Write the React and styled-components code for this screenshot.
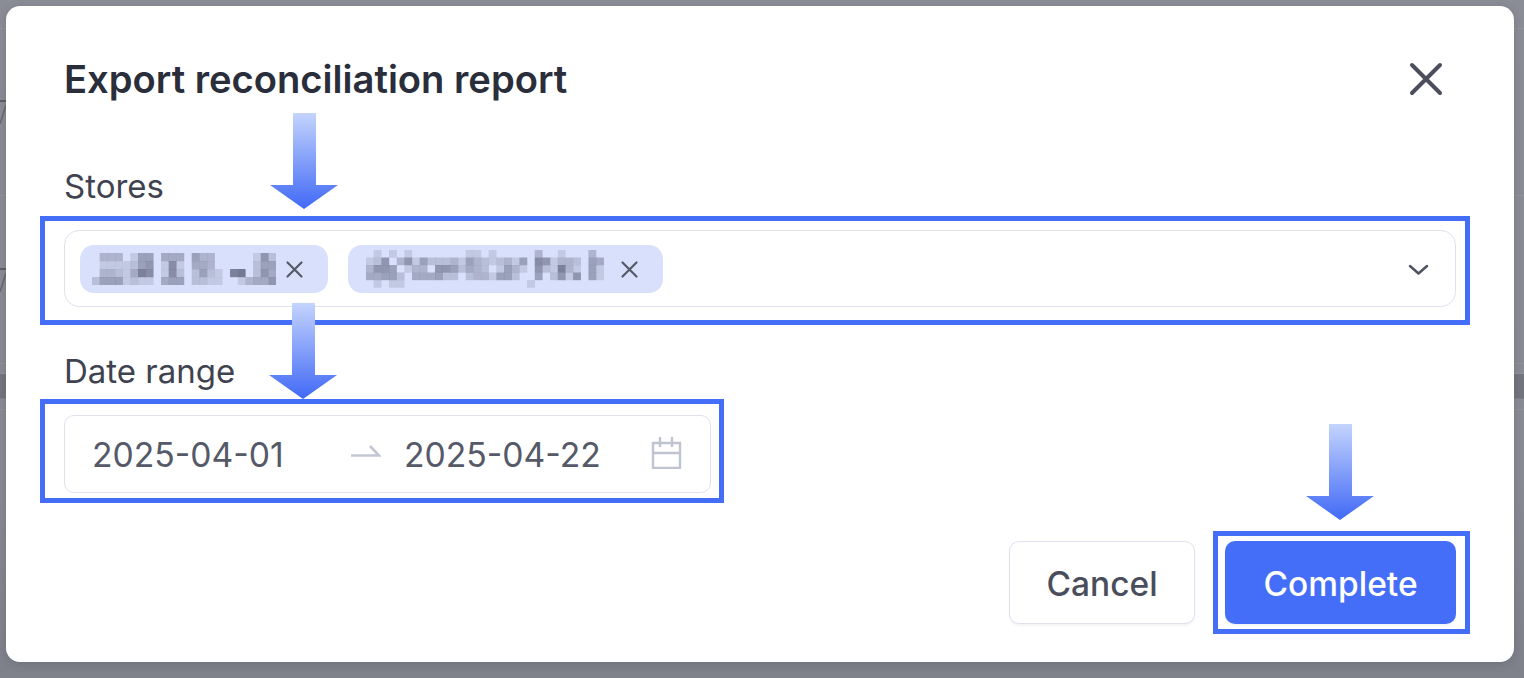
import React from 'react';
import styled, { createGlobalStyle } from 'styled-components';

const GlobalStyle = createGlobalStyle`
  html, body {
    margin: 0;
    padding: 0;
    background: #85878f;
  }
  body {
    font-family: Inter, "Noto Sans", "Liberation Sans", sans-serif;
    -webkit-font-smoothing: antialiased;
  }
`;

const Page = styled.div`
  position: relative;
  width: 100%;
  height: 678px;
  overflow: hidden;
  background: linear-gradient(180deg, #8a8c96 0%, #888a94 70%, #7e808a 100%);
`;

const BackdropRow = styled.div`
  box-sizing: border-box;
  height: ${(p) => p.$height}px;
  padding-top: ${(p) => p.$pad || 0}px;
  border-bottom: 1px solid rgba(255, 255, 255, 0.07);
  background: ${(p) => (p.$band ? '#72747e' : 'transparent')};
`;

const RowMark = styled.svg`
  display: block;
  width: 6px;
  height: 26px;
`;

const ModalLayer = styled.div`
  position: absolute;
  inset: 6px 10px 16px 6px;
`;

const Modal = styled.div`
  box-sizing: border-box;
  height: 100%;
  padding: 48px 58px 28px;
  display: flex;
  flex-direction: column;
  background: #fff;
  border-radius: 14px;
  box-shadow: 0 2px 8px rgba(40, 42, 50, 0.18);
`;

const Header = styled.div`
  display: flex;
  align-items: center;
  justify-content: space-between;
  height: 50px;
  margin-bottom: 62px;
`;

const Title = styled.h2`
  margin: 0;
  font-size: 38.15px;
  font-weight: 600;
  line-height: 50px;
  color: #2a2e3b;
`;

const CloseIcon = styled.svg`
  width: 34px;
  height: 34px;
  margin-right: 13px;
  stroke: #4b4f5d;
  stroke-width: 4;
  stroke-linecap: round;
  fill: none;
`;

const Label = styled.label`
  display: block;
  margin-top: ${(p) => p.$top || 0}px;
  font-size: 33px;
  line-height: 40px;
  color: #3f4350;
`;

const Highlight = styled.div`
  box-sizing: border-box;
  border: 5px solid #456ef8;
  padding: ${(p) => p.$padding};
  margin: ${(p) => p.$margin};
  width: ${(p) => p.$width || 'auto'};
`;

const SelectField = styled.div`
  box-sizing: border-box;
  height: 77px;
  display: flex;
  align-items: center;
  gap: 20px;
  padding: 1px 26px 0 15px;
  border: 1.5px solid #dfe2ee;
  border-radius: 15px;
`;

const Chip = styled.div`
  display: flex;
  align-items: center;
  height: 48px;
  padding: ${(p) => p.$padding};
  gap: ${(p) => p.$gap}px;
  background: #d9e0fb;
  border-radius: 14px;
`;

const Mosaic = styled.svg`
  display: block;
  flex: none;
`;

const ChipClose = styled.svg`
  width: 19px;
  height: 19px;
  flex: none;
  stroke: #565a68;
  stroke-width: 2.2;
  stroke-linecap: round;
  fill: none;
`;

const Chevron = styled.svg`
  width: 21px;
  height: 11px;
  margin-left: auto;
  stroke: #4f5362;
  stroke-width: 2.5;
  stroke-linecap: round;
  stroke-linejoin: round;
  fill: none;
`;

const DateField = styled.div`
  box-sizing: border-box;
  height: 78px;
  display: flex;
  align-items: center;
  padding-left: 27px;
  border: 1.5px solid #dfe2ee;
  border-radius: 10px;
`;

const DateText = styled.span`
  width: ${(p) => p.$width}px;
  padding-top: 2px;
  font-size: 33.7px;
  line-height: 40px;
  color: #555968;
  white-space: nowrap;
`;

const RangeArrow = styled.svg`
  width: 30px;
  height: 12px;
  flex: none;
  margin: 0 23px 6px 0;
  stroke: #c3c6d3;
  stroke-width: 2.6;
  fill: none;
`;

const CalendarIcon = styled.svg`
  width: 31px;
  height: 33px;
  flex: none;
  margin-bottom: 4px;
  stroke: #c0c3d0;
  stroke-width: 2.4;
  fill: none;
`;

const Footer = styled.div`
  display: flex;
  justify-content: flex-end;
  align-items: center;
  gap: 18px;
  margin-top: 28px;
  margin-right: -14px;
`;

const Button = styled.button`
  display: block;
  box-sizing: border-box;
  width: ${(p) => p.$width}px;
  height: 83px;
  padding: 2px 0 0;
  font-family: inherit;
  font-size: 33.5px;
  font-weight: 500;
  border-radius: 10px;
  border: ${(p) => (p.$primary ? 'none' : '1.5px solid #dfe2ee')};
  background: ${(p) => (p.$primary ? '#456ef8' : '#fff')};
  color: ${(p) => (p.$primary ? '#fff' : '#4a4e5c')};
  box-shadow: 0 2px 2px rgba(30, 35, 60, 0.05);
`;

const ArrowSvg = styled.svg`
  position: absolute;
  left: ${(p) => p.$left}px;
  top: ${(p) => p.$top}px;
  width: 68px;
  height: 96px;
`;

const FIRST_CHIP = [
  '033301550444053300000162',
  '011112560171044300000255',
  '033214870172025210890264',
  '255512110455022110013446',
];

const SECOND_CHIP = [
  '0101010000000110100000300100030',
  '1260361522231532123150761332054',
  '3665013306652432015310621831051',
  '4455204445220233155200502616051',
  '0101100000000000000001000000000',
];

const cellOpacity = (level) => (level === 0 ? 0 : 0.1 + level * 0.075);

const MosaicCells = ({ rows, cell, cellH }) => (
  <Mosaic width={rows[0].length * cell} height={rows.length * cellH} viewBox={`0 0 ${rows[0].length * cell} ${rows.length * cellH}`}>
    <filter id={`soft-${rows[0].length}`}>
      <feGaussianBlur stdDeviation="0.6" />
    </filter>
    <g filter={`url(#soft-${rows[0].length})`}>
      {rows.map((row, y) =>
        row.split('').map((level, x) => (
          <rect
            key={`${x}-${y}`}
            x={x * cell}
            y={y * cellH}
            width={cell + 0.2}
            height={cellH + 0.2}
            fill="#565a72"
            opacity={cellOpacity(Number(level))}
          />
        ))
      )}
    </g>
  </Mosaic>
);

const SmallX = () => (
  <ChipClose viewBox="0 0 19 19">
    <path d="M2.5 2.5l14 14M16.5 2.5l-14 14" />
  </ChipClose>
);

const DownArrow = ({ id, left, top }) => (
  <ArrowSvg $left={left} $top={top} viewBox="0 0 68 96">
    <defs>
      <linearGradient id={id} x1="0" y1="0" x2="0" y2="1">
        <stop offset="0" stopColor="#c4d4fd" />
        <stop offset="1" stopColor="#4169f6" />
      </linearGradient>
    </defs>
    <path d="M23 0h23v72h22L34 96 0 72h23z" fill={`url(#${id})`} />
  </ArrowSvg>
);

const BackdropMark = () => (
  <RowMark viewBox="0 0 6 26">
    <path d="M0 1h6" stroke="#5c5e68" strokeWidth="2" />
    <path d="M6 5L0 24" stroke="#686a74" strokeWidth="1.6" fill="none" />
  </RowMark>
);

const App = () => (
  <>
    <GlobalStyle />
    <Page>
      <BackdropRow $height={29} />
      <BackdropRow $height={167} $pad={71}>
        <BackdropMark />
      </BackdropRow>
      <BackdropRow $height={168} $pad={72}>
        <BackdropMark />
      </BackdropRow>
      <BackdropRow $height={10} />
      <BackdropRow $height={25} $band />
      <BackdropRow $height={11} />

      <ModalLayer>
        <Modal>
          <Header>
            <Title>Export reconciliation report</Title>
            <CloseIcon viewBox="0 0 34 34">
              <path d="M3 3l28 28M31 3L3 31" />
            </CloseIcon>
          </Header>

          <Label>Stores</Label>
          <Highlight $margin="10px -14px 0 -24px" $padding="9px 9px 13px 19px">
            <SelectField>
              <Chip $padding="0 24px 0 12px" $gap={9}>
                <MosaicCells rows={FIRST_CHIP} cell={7.67} cellH={8} />
                <SmallX />
              </Chip>
              <Chip $padding="0 24px 0 18px" $gap={16}>
                <MosaicCells rows={SECOND_CHIP} cell={7.67} cellH={7.5} />
                <SmallX />
              </Chip>
              <Chevron viewBox="0 0 21 11">
                <path d="M2 2l8.5 7.5L19 2" />
              </Chevron>
            </SelectField>
          </Highlight>

          <Label $top={26}>Date range</Label>
          <Highlight $margin="8px 0 0 -24px" $padding="11px 8px 5px 19px" $width="684px">
            <DateField>
              <DateText $width={259}>2025-04-01</DateText>
              <RangeArrow viewBox="0 0 30 12">
                <path d="M0 10.5h28L19 1" />
              </RangeArrow>
              <DateText $width={247}>2025-04-22</DateText>
              <CalendarIcon viewBox="0 0 31 33">
                <path d="M2 7h27v25H2zM2 17h27M9 1v10M21 1v10" />
              </CalendarIcon>
            </DateField>
          </Highlight>

          <Footer>
            <Button $width={186}>Cancel</Button>
            <Highlight $padding="5px 9px 5px 7px">
              <Button $primary $width={231}>Complete</Button>
            </Highlight>
          </Footer>
        </Modal>
      </ModalLayer>

      <DownArrow id="arrow-stores" left={270} top={113} />
      <DownArrow id="arrow-date" left={269} top={303} />
      <DownArrow id="arrow-complete" left={1306} top={424} />
    </Page>
  </>
);

export default App;
